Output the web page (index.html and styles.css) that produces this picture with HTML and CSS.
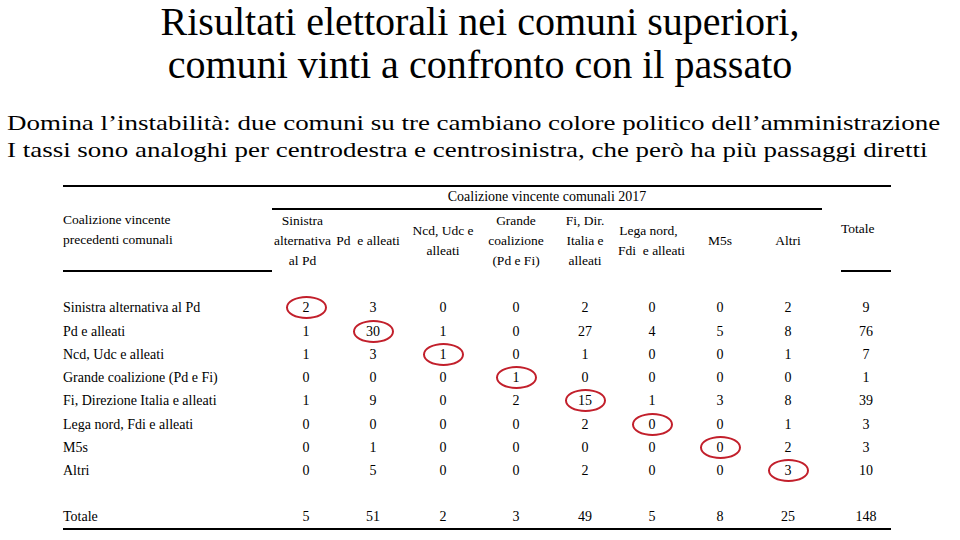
FILE: index.html
```html
<!DOCTYPE html>
<html lang="it">
<head>
<meta charset="utf-8">
<title>Risultati elettorali</title>
<link rel="stylesheet" href="styles.css">
</head>
<body>
<div class="slide">
  <h1 class="title">Risultati elettorali nei comuni superiori,<br>comuni vinti a confronto con il passato</h1>
  <p class="subtitle">Domina l’instabilità: due comuni su tre cambiano colore politico dell’amministrazione<br>I tassi sono analoghi per centrodestra e centrosinistra, che però ha più passaggi diretti</p>
  <table class="grid">
    <colgroup>
      <col class="c-label"><col class="c-68"><col class="c-66"><col class="c-74"><col class="c-72"><col class="c-66"><col class="c-68"><col class="c-68"><col class="c-68"><col class="c-gap"><col class="c-tot">
    </colgroup>
    <tr class="r-top">
      <td></td>
      <td colspan="8" class="span-head">Coalizione vincente comunali 2017</td>
      <td></td><td></td>
    </tr>
    <tr class="r-head">
      <td class="lab-head">Coalizione vincente<br>precedenti comunali</td>
      <td class="h h-left">Sinistra<br>alternativa<br>al Pd</td>
      <td class="h"><span class="shift">Pd&nbsp; e alleati</span></td>
      <td class="h">Ncd, Udc e<br>alleati</td>
      <td class="h">Grande<br>coalizione<br>(Pd e Fi)</td>
      <td class="h">Fi, Dir.<br>Italia e<br>alleati</td>
      <td class="h h-left">Lega nord,<br>Fdi&nbsp; e alleati</td>
      <td class="h">M5s</td>
      <td class="h">Altri</td>
      <td></td>
      <td class="tot-head">Totale</td>
    </tr>
    <tr class="r-gap"><td colspan="11"></td></tr>
    <tr class="r-data">
      <td class="lab">Sinistra alternativa al Pd</td>
      <td><span class="ring"></span>2</td><td>3</td><td>0</td><td>0</td><td>2</td><td>0</td><td>0</td><td>2</td><td></td><td>9</td>
    </tr>
    <tr class="r-data">
      <td class="lab">Pd e alleati</td>
      <td>1</td><td><span class="ring"></span>30</td><td>1</td><td>0</td><td>27</td><td>4</td><td>5</td><td>8</td><td></td><td>76</td>
    </tr>
    <tr class="r-data">
      <td class="lab">Ncd, Udc e alleati</td>
      <td>1</td><td>3</td><td><span class="ring"></span>1</td><td>0</td><td>1</td><td>0</td><td>0</td><td>1</td><td></td><td>7</td>
    </tr>
    <tr class="r-data">
      <td class="lab">Grande coalizione (Pd e Fi)</td>
      <td>0</td><td>0</td><td>0</td><td><span class="ring"></span>1</td><td>0</td><td>0</td><td>0</td><td>0</td><td></td><td>1</td>
    </tr>
    <tr class="r-data">
      <td class="lab">Fi, Direzione Italia e alleati</td>
      <td>1</td><td>9</td><td>0</td><td>2</td><td><span class="ring"></span>15</td><td>1</td><td>3</td><td>8</td><td></td><td>39</td>
    </tr>
    <tr class="r-data">
      <td class="lab">Lega nord, Fdi e alleati</td>
      <td>0</td><td>0</td><td>0</td><td>0</td><td>2</td><td><span class="ring"></span>0</td><td>0</td><td>1</td><td></td><td>3</td>
    </tr>
    <tr class="r-data">
      <td class="lab">M5s</td>
      <td>0</td><td>1</td><td>0</td><td>0</td><td>0</td><td>0</td><td><span class="ring"></span>0</td><td>2</td><td></td><td>3</td>
    </tr>
    <tr class="r-data">
      <td class="lab">Altri</td>
      <td>0</td><td>5</td><td>0</td><td>0</td><td>2</td><td>0</td><td>0</td><td><span class="ring"></span>3</td><td></td><td>10</td>
    </tr>
    <tr class="r-data"><td colspan="11"></td></tr>
    <tr class="r-data r-total">
      <td class="lab">Totale</td>
      <td>5</td><td>51</td><td>2</td><td>3</td><td>49</td><td>5</td><td>8</td><td>25</td><td></td><td>148</td>
    </tr>
  </table>
</div>
</body>
</html>
```

FILE: styles.css
```css
html, body {
  margin: 0;
  padding: 0;
  background: #ffffff;
}

.slide {
  width: 960px;
  height: 540px;
  overflow: hidden;
  font-family: "Liberation Serif", "Times New Roman", serif;
  color: #000000;
}

.title {
  margin: 0;
  font-weight: normal;
  font-size: 39px;
  line-height: 43.3px;
  text-align: center;
  transform: scaleX(1.026);
  transform-origin: center;
}

.subtitle {
  margin: 22px 0 0 7px;
  font-size: 22px;
  line-height: 27px;
  white-space: nowrap;
  transform: scaleX(1.225);
  transform-origin: left center;
}

.grid {
  margin: 22px 0 0 63px;
  width: 828px;
  table-layout: fixed;
  border-collapse: separate;
  border-spacing: 0;
  font-size: 14px;
}

.grid td {
  padding: 0;
  text-align: center;
  vertical-align: middle;
  position: relative;
  white-space: nowrap;
}

.c-label { width: 209px; }
.c-68 { width: 68px; }
.c-66 { width: 66px; }
.c-74 { width: 74px; }
.c-72 { width: 72px; }
.c-gap { width: 19px; }
.c-tot { width: 50px; }

.r-top { height: 25px; }
.r-top td {
  border-top: 2px solid #000;
}
.span-head {
  border-bottom: 2px solid #000;
  line-height: 20px;
  padding-top: 2px;
}

.r-head { height: 62px; }
.r-head td {
  line-height: 20px;
  font-size: 13.5px;
}
.grid td.h-left {
  padding-right: 7px;
}
.grid td.lab-head {
  text-align: left;
  vertical-align: top;
  border-bottom: 2px solid #000;
}
.grid td.tot-head {
  vertical-align: top;
  padding: 9px 20px 0 0;
  border-bottom: 2px solid #000;
}
.shift {
  display: block;
  margin-left: -10px;
}

.r-gap { height: 25px; }
.r-data { height: 23.3px; }
.grid td.lab {
  text-align: left;
}

.r-total td {
  border-bottom: 2px solid #000;
}

.ring {
  position: absolute;
  left: 50%;
  top: 50%;
  width: 37px;
  height: 19px;
  margin: -12px 0 0 -20px;
  border: 2px solid #c21f2b;
  border-radius: 50%;
}
```
